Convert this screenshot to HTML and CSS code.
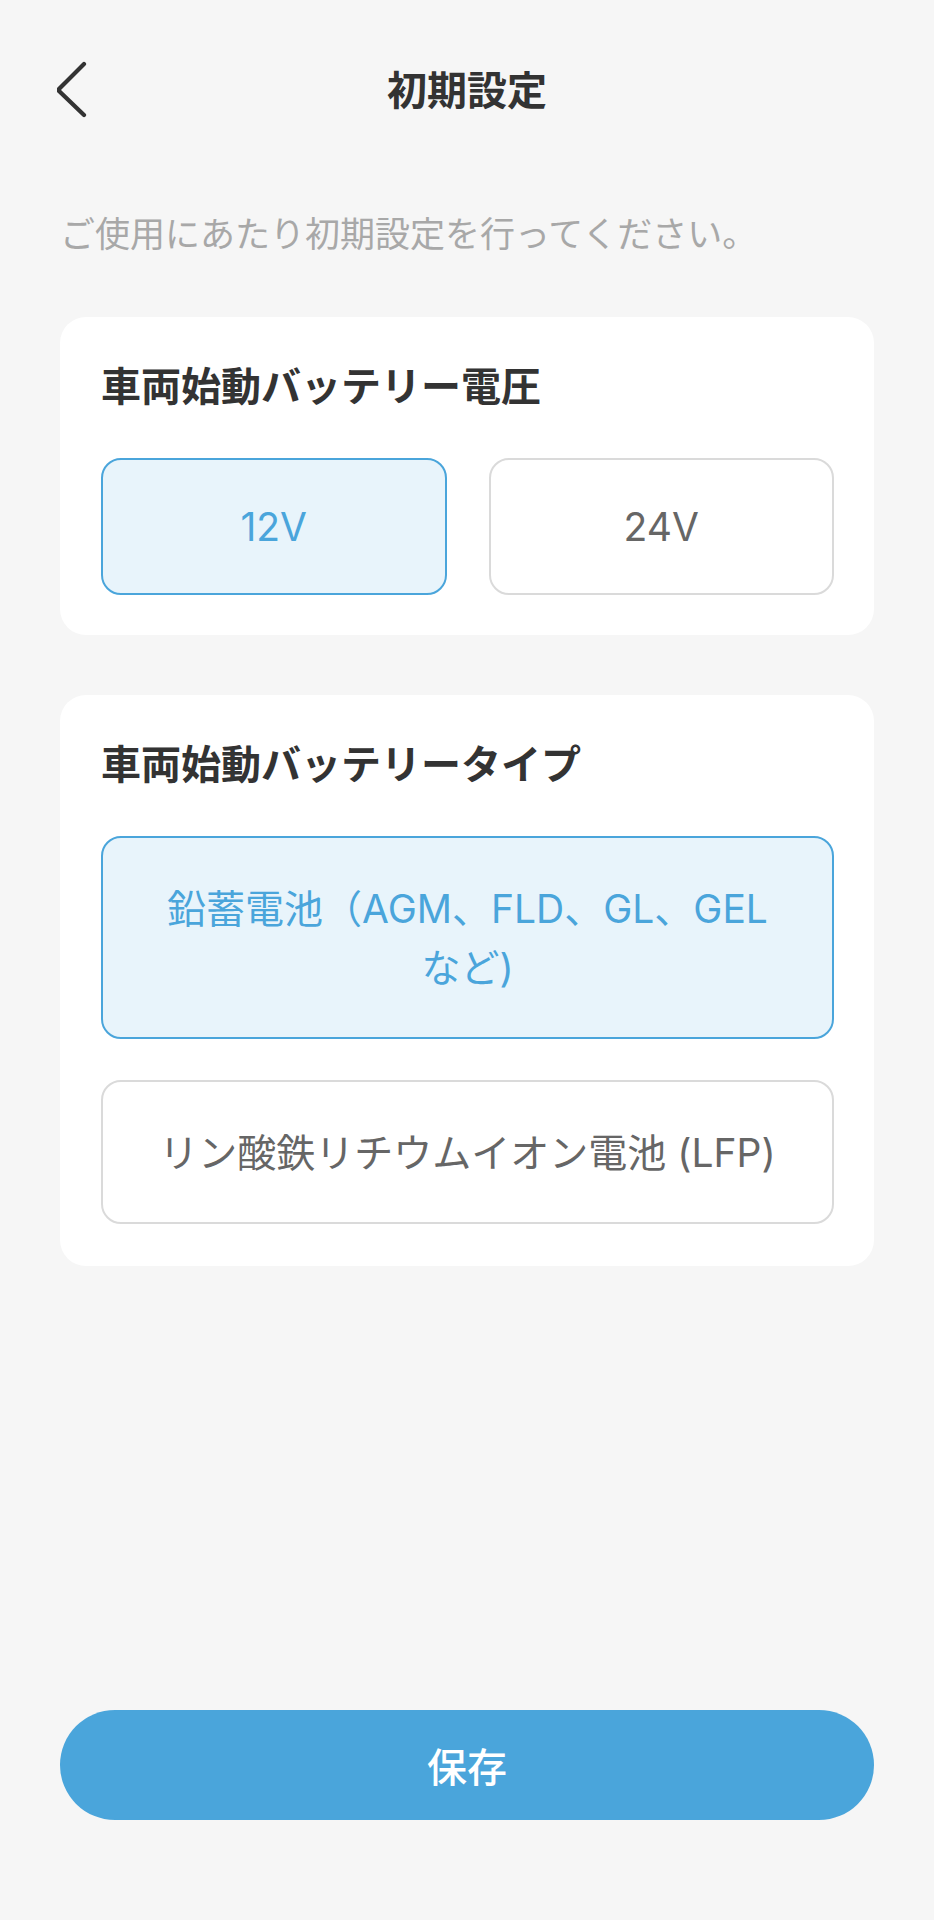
FILE: index.html
```html
<!DOCTYPE html>
<html lang="ja">
<head>
<meta charset="utf-8">
<title>初期設定</title>
<link rel="stylesheet" href="styles.css">
</head>
<body>
<div class="page">
  <header class="topbar">
    <button class="back" aria-label="戻る">
      <svg width="40" height="60" viewBox="0 0 40 60"><path d="M27 3 L1 29 L27 54" fill="none" stroke="#333" stroke-width="4.2" stroke-linecap="round" stroke-linejoin="round"/></svg>
    </button>
    <h1 class="title">初期設定</h1>
  </header>

  <p class="lead">ご使用にあたり初期設定を行ってください。</p>

  <section class="card">
    <h2 class="card-title">車両始動バッテリー電圧</h2>
    <div class="row">
      <div class="opt opt-v selected">12V</div>
      <div class="opt opt-v">24V</div>
    </div>
  </section>

  <section class="card card2">
    <h2 class="card-title">車両始動バッテリータイプ</h2>
    <div class="col">
      <div class="opt selected">鉛蓄電池（AGM、FLD、GL、GEL<br>など)</div>
      <div class="opt">リン酸鉄リチウムイオン電池 (LFP)</div>
    </div>
  </section>

  <div class="spacer"></div>
  <button class="save">保存</button>
</div>
</body>
</html>
```

FILE: styles.css
```css
* { box-sizing: border-box; }
html, body { margin: 0; padding: 0; }
body {
  background: #f6f6f6;
  font-family: "Inter", "Noto Sans CJK JP", sans-serif;
  color: #333;
}
.page {
  min-height: 1920px;
  display: flex;
  flex-direction: column;
  padding: 0 60px 100px;
}
.topbar {
  position: relative;
  height: 96px;
  margin-top: 40px;
  display: flex;
  align-items: center;
  justify-content: center;
}
.back {
  position: absolute;
  left: -3px;
  top: 21px;
  width: 40px;
  height: 60px;
  padding: 0;
  border: 0;
  background: none;
}
.back svg { display: block; }
.title {
  margin: 0;
  font-family: "Noto Sans CJK JP", sans-serif;
  font-size: 40px;
  font-weight: 700;
  color: #333;
  line-height: 52px;
}
.lead {
  margin: 72px 0 0 0;
  font-family: "Noto Sans CJK JP", sans-serif;
  font-size: 35px;
  line-height: 48px;
  color: #a8a8a8;
  font-weight: 400;
}
.card {
  background: #fff;
  border-radius: 26px;
  padding: 41px 40px 40px 41px;
  margin-top: 61px;
}
.card2 { margin-top: 60px; padding-bottom: 42px; }
.card-title {
  margin: 0;
  font-family: "Noto Sans CJK JP", sans-serif;
  font-size: 40px;
  line-height: 52px;
  font-weight: 700;
  color: #333;
}
.row {
  margin-top: 48px;
  display: grid;
  grid-template-columns: 1fr 1fr;
  gap: 42px;
}
.col {
  margin-top: 48px;
  display: flex;
  flex-direction: column;
  gap: 41px;
}
.opt {
  border: 2px solid #dadada;
  border-radius: 20px;
  background: #fff;
  color: #666;
  font-size: 39px;
  line-height: 59px;
  padding: 40.5px 20px;
  text-align: center;
}
.opt-v { padding: 37px 20px; }
.opt.selected {
  border: 2.5px solid #4aa5db;
  background: #e8f4fb;
  color: #4aa5db;
}
.spacer { flex: 1; }
.save {
  height: 110px;
  border: 0;
  border-radius: 55px;
  background: #4aa5db;
  color: #fff;
  font-family: "Noto Sans CJK JP", sans-serif;
  font-size: 40px;
  font-weight: 500;
  width: 100%;
}
```
